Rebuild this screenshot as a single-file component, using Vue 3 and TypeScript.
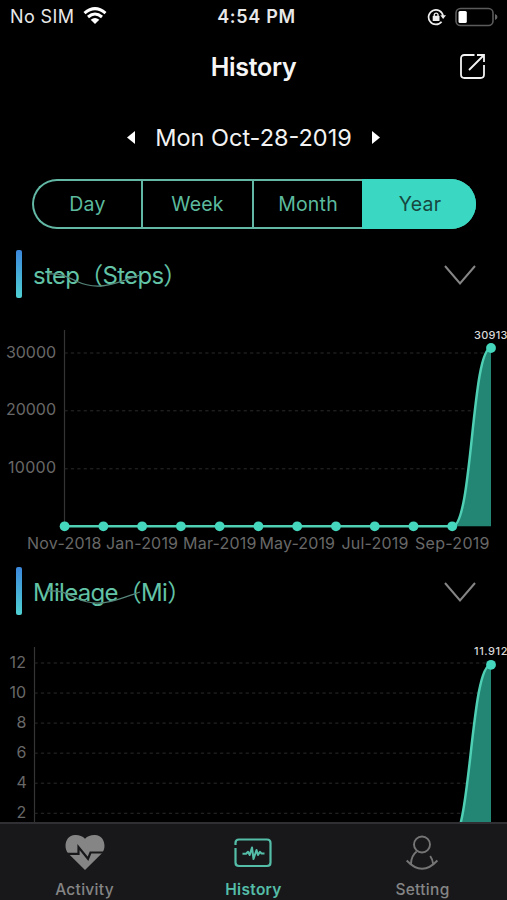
<script setup lang="ts">
import { ref } from 'vue'

interface Mark { label: string; y: number; width: number }
interface Chart {
  title: string
  unit: string
  axisX: number
  base: number
  marks: Mark[]
  points: number[]
  peakY: number
  peakLabel: string
  curve: string
  months: { label: string; x: number; width: number }[]
}

const periods = ['Day', 'Week', 'Month', 'Year']
const active = ref('Year')

const spread = (from: number, to: number): number[] =>
  Array.from({ length: 12 }, (_, i) => from + ((to - from) * i) / 11)

const months = [
  { label: 'Nov-2018', x: 27, width: 74.5 },
  { label: 'Jan-2019', x: 106, width: 72 },
  { label: 'Mar-2019', x: 183, width: 73.5 },
  { label: 'May-2019', x: 259.5, width: 75.5 },
  { label: 'Jul-2019', x: 341.5, width: 67 },
  { label: 'Sep-2019', x: 415, width: 74.5 },
]

const charts: Chart[] = [
  {
    title: 'step', unit: 'Steps', axisX: 64.5, base: 226.3,
    marks: [
      { label: '30000', y: 53, width: 50 },
      { label: '20000', y: 110.8, width: 50 },
      { label: '10000', y: 168.8, width: 48 },
    ],
    points: spread(64.6, 491), peakY: 48, peakLabel: '30913',
    curve: 'M64.6 226.3H452.5C472.5 226.3 471.5 48 491 48', months,
  },
  {
    title: 'Mileage', unit: 'Mi', axisX: 34.5, base: 226.3,
    marks: [12, 10, 8, 6, 4, 2].map((n, i) => ({
      label: String(n), y: 46 + i * 30.05, width: n > 9 ? 16.5 : 9.5,
    })),
    points: spread(34.5, 491), peakY: 47.8, peakLabel: '11.912',
    curve: 'M34.5 226.3H449.5C471.5 226.3 470 47.8 491 47.8', months: [],
  },
]
</script>

<template>
  <div class="screen">
    <div class="status">
      <div class="carrier">
        <span>No SIM</span>
        <svg width="24" height="18" viewBox="0 0 24 18" fill="none" stroke="#fff" stroke-width="3">
          <path d="M1.5 6.2Q12-3 22.500 6.200" />
          <path d="M5 10Q12 4 19 10" />
          <path d="M12 17 7.700 12.700Q12 9.300 16.300 12.700Z" fill="#fff" stroke="none" />
        </svg>
      </div>
      <span class="clock">4:54 PM</span>
      <div class="power">
        <svg width="20" height="18" viewBox="0 0 20 18" fill="none" stroke="#eee" stroke-width="1.700">
          <path d="M14.600 13.700A7.300 7.300 0 1 1 16.100 8" />
          <path d="M13.300 7.300H19L16.100 11Z" fill="#eee" stroke="none" />
          <rect x="5.700" y="7.800" width="6.800" height="5.200" rx=".6" fill="#eee" stroke="none" />
          <path d="M7.300 8V6.500a1.900 1.900 0 0 1 3.700 0V8" stroke-width="1.300" />
        </svg>
        <svg width="44" height="20" viewBox="0 0 44 20">
          <rect x="1" y="1.500" width="37" height="17" rx="4.500" fill="none" stroke="#5b5b5b" stroke-width="1.600" />
          <rect x="3.500" y="4" width="8.300" height="12" rx="1.500" fill="#fff" />
          <path d="M40 7q2.500 1 2.500 3T40 13Z" fill="#666" />
        </svg>
      </div>
    </div>

    <header class="header">
      <h1>History</h1>
      <svg class="share" width="28" height="28" viewBox="0 0 28 28" fill="none" stroke="#f3f3f3" stroke-width="1.800">
        <path d="M15.500 2H5.500Q2 2 2 5.500V21.500Q2 25 5.500 25H21.500Q25 25 25 21.500V12" />
        <path d="M10 17 24.500 2.500M18 2H25V9" />
      </svg>
    </header>

    <div class="date">
      <svg width="8" height="13" viewBox="0 0 8 13"><path d="M8 0V13L0 6.500Z" fill="#fff" /></svg>
      <span>Mon Oct-28-2019</span>
      <svg width="8" height="13" viewBox="0 0 8 13"><path d="M0 0V13L8 6.500Z" fill="#fff" /></svg>
    </div>

    <nav class="periods">
      <button v-for="p in periods" :key="p" :class="{ active: p === active }" @click="active = p">{{ p }}</button>
    </nav>

    <main class="content">
      <section v-for="c in charts" :key="c.title" class="metric">
        <div class="metric-head">
          <i class="accent"></i>
          <h2>{{ c.title }}（{{ c.unit }}）</h2>
          <svg class="swoosh" width="96" height="22" viewBox="0 0 96 22" fill="none" stroke="#56857a" stroke-width="1.300">
            <path d="M1 2C15 1 19 4 30 9C51 19 65 13 94 3" />
          </svg>
          <svg class="chevron" width="32" height="21" viewBox="0 0 32 21" fill="none" stroke="#858585" stroke-width="2">
            <path d="M1 1 16 18.500 31 1" />
          </svg>
        </div>
        <svg class="chart" width="507" height="260" viewBox="0 0 507 260">
          <g stroke="#2b2b2b">
            <line :x1="c.axisX" :x2="c.axisX" y1="30" :y2="c.base" stroke="#343434" stroke-width="1.200" />
            <line v-for="m in c.marks" :key="m.label" :x1="c.axisX" x2="491" :y1="m.y" :y2="m.y" stroke-dasharray="3.200 3.200" />
          </g>
          <text
            v-for="m in c.marks" :key="m.label" class="axis" :x="c.axisX - 8.500 - m.width" :y="m.y + 4.500"
            :textLength="m.width"
          >{{ m.label }}</text>
          <path :d="`${c.curve}V${c.base}Z`" fill="#238675" />
          <path :d="c.curve" fill="none" stroke="#4fd0b5" stroke-width="2.500" />
          <circle v-for="(x, i) in c.points" :key="x" :cx="x" :cy="i === 11 ? c.peakY : c.base" r="4.900" fill="#45d7bd" />
          <text class="peak" x="474" :y="c.peakY - 9.500" textLength="33.500">{{ c.peakLabel }}</text>
          <text v-for="m in c.months" :key="m.label" class="axis" :x="m.x" y="249" :textLength="m.width">{{ m.label }}</text>
        </svg>
      </section>
    </main>

    <footer class="tabs">
      <div class="tab">
        <svg width="42" height="40" viewBox="0 0 42 40">
          <path d="M21 37 3.800 20C-1 13.500 2 2 11 2Q17 1.700 21 5.700Q25 1.700 31 2C40 2 43 13.500 38.200 20Z" fill="#858585" />
          <path d="M0 20.800H14.500V14L24 25.800 26.500 19.500H42" fill="none" stroke="#18181b" stroke-width="2.200" />
        </svg>
        <span>Activity</span>
      </div>
      <div class="tab current">
        <svg width="42" height="40" viewBox="0 0 42 40" fill="none" stroke="#55bea8" stroke-width="2.200">
          <path d="M2.500 12V10Q2.500 6.500 6 6.500H34Q37.500 6.500 37.500 10V29.500Q37.500 33 34 33H6Q2.500 33 2.500 29.500V15" />
          <path d="M9.500 20.800H13L15 18.800 16.700 22 19 14.500 20.500 26 23.500 17 25 22 27 18.800 28.500 20.500H31.500" stroke-width="2" stroke-linejoin="round" />
        </svg>
        <span>History</span>
      </div>
      <div class="tab">
        <svg width="42" height="40" viewBox="0 0 42 40" fill="none" stroke="#757575" stroke-width="1.900">
          <circle cx="20" cy="11.500" r="8" />
          <path d="M14.700 18.500Q9.200 22.500 9 31M28.200 23Q30.700 26.500 31.200 31M4.700 27.500Q20 44 35.400 27.500" />
        </svg>
        <span>Setting</span>
      </div>
    </footer>
  </div>
</template>

<style>
body { margin: 0; background: #000; }
</style>

<style scoped>
* { box-sizing: border-box; }
.screen {
  width: 507px; height: 900px; overflow: hidden; display: flex; flex-direction: column;
  background: #000; color: #f3f3f3; font-family: Inter, "Noto Sans CJK SC", sans-serif;
}
svg { display: block; flex: none; }
h1, h2 { margin: 0; }
.status {
  height: 34px; flex: none; display: grid; grid-template-columns: 1fr auto 1fr; align-items: center;
  padding: 0 8px 0 10px; font-size: 18px; line-height: 34px; color: #e8e8e8;
}
.carrier { display: flex; align-items: center; gap: 9px; }
.carrier span { letter-spacing: 0.4px; }
.carrier svg { margin-top: -2px; }
.clock { font-weight: 600; letter-spacing: 0.7px; padding-left: 4px; }
.power { display: flex; align-items: center; justify-content: flex-end; gap: 8px; }
.header {
  height: 66px; flex: none; display: grid; grid-template-columns: 1fr auto 1fr; align-items: center; padding: 0 20px;
}
.header h1 { grid-column: 2; font-size: 25px; line-height: 30px; font-weight: 600; letter-spacing: -0.3px; color: #f6f6f6; }
.share { justify-self: end; }
.date {
  height: 80px; flex: none; padding-bottom: 5px; display: flex; align-items: center; justify-content: center; gap: 20px;
  font-size: 23.5px;
}
.periods {
  flex: none; width: 444px; height: 50px; margin: -1px 0 0 32px; display: grid; grid-template-columns: 107px 111px 110px 1fr;
  border: 2px solid #62b8a5; border-radius: 25px;
}
.periods button {
  border: 0; border-left: 2px solid #62b8a5; padding: 0; background: none; color: #5cba9e;
  font: 400 19.5px Inter, sans-serif; letter-spacing: 0.2px;
}
.periods button:first-child { border-left: 0; }
.periods button.active { background: #3ad8c2; border-color: #3ad8c2; color: #16483f; }
.periods button.active:last-child { margin: -2px -2px -2px 0; border-radius: 0 25px 25px 0; }
.periods:has(.active:last-child) { border-right-color: #3ad8c2; }
.content { flex: 1; min-height: 0; overflow: hidden; padding-top: 21px; }
.metric { height: 317px; }
.metric-head { height: 48px; position: relative; display: flex; align-items: center; padding: 0 31px 0 16px; }
.accent { width: 6px; height: 48px; border-radius: 2px; background: linear-gradient(#3c88dc, #4fd0d2); }
.metric-head h2 {
  margin-left: 11px; padding-top: 3px; font-size: 24px; line-height: 30px; font-weight: 400;
  letter-spacing: -0.7px; color: #62c3a6; white-space: nowrap;
}
.swoosh { position: absolute; left: 46px; top: 22px; }
.chevron { margin-left: auto; margin-top: 2px; }
.chart { margin-top: 2px; overflow: hidden; }
.axis { font-size: 16px; fill: #686868; }
.peak { font-size: 11px; font-weight: 500; fill: #d8d8d8; }
.tabs {
  height: 78px; flex: none; display: grid; grid-template-columns: repeat(3, 1fr);
  background: #18181b; border-top: 2px solid #303034;
}
.tab { display: flex; flex-direction: column; align-items: center; padding-top: 9px; color: #858585; font-size: 15.5px; font-weight: 500; }
.tab span { margin-top: 7px; line-height: 20px; letter-spacing: 0.3px; }
.tab.current { color: #55bea8; font-weight: 600; }
</style>
